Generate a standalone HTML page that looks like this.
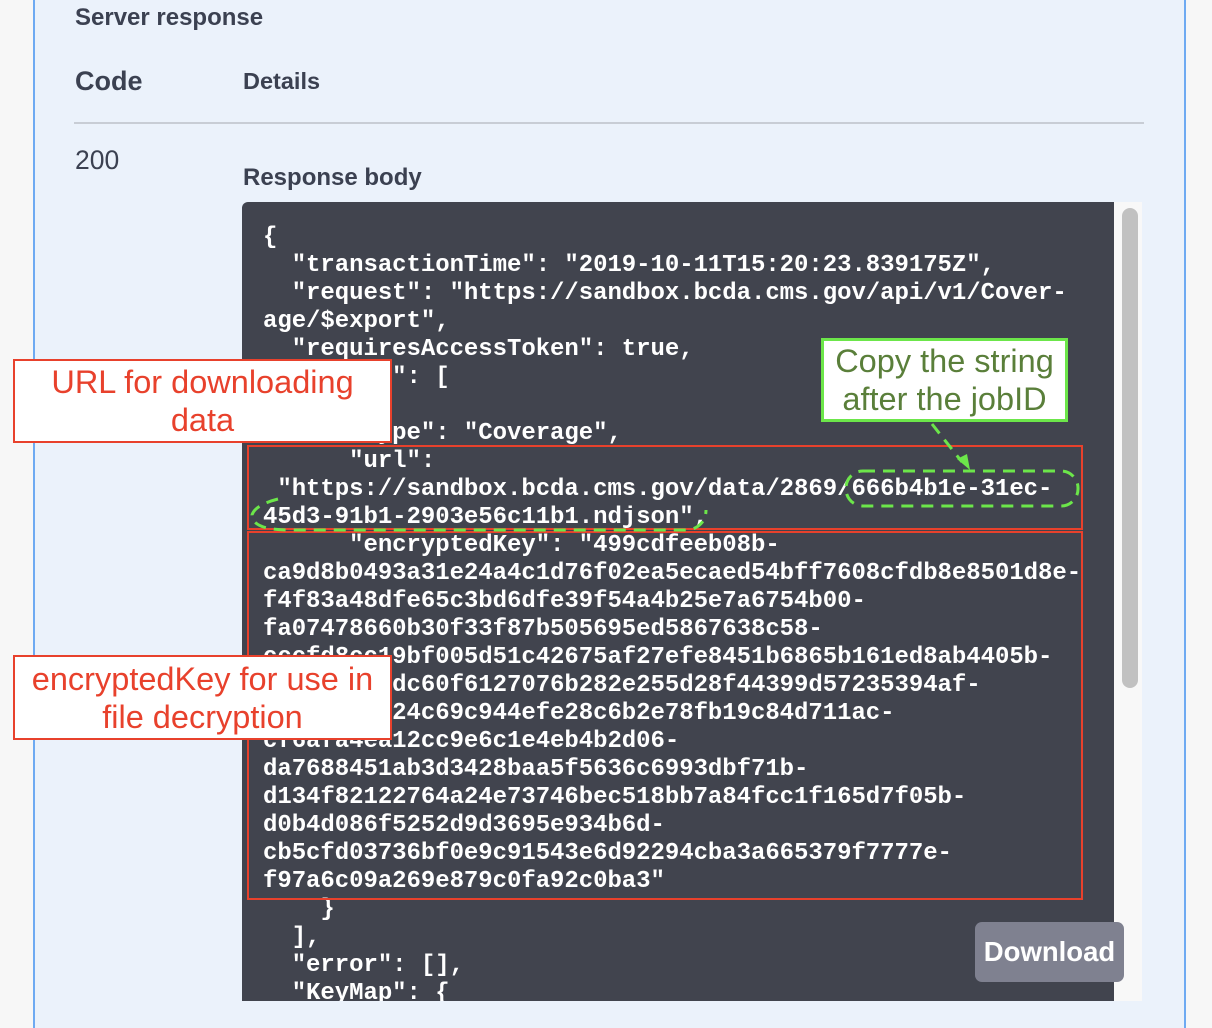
<!DOCTYPE html>
<html><head><meta charset="utf-8"><style>
*{margin:0;padding:0;box-sizing:border-box}
body{width:1212px;height:1018px;overflow:hidden;background:#f7f7f7;font-family:"Liberation Sans",Arial,sans-serif;position:relative}
.panel{position:absolute;left:33px;top:-2px;width:1153px;height:1030px;background:#ebf2fb;border-left:2px solid #6eaaf2;border-right:2px solid #6eaaf2}
.t{position:absolute;color:#3b4151;white-space:nowrap}
.code{position:absolute;left:242px;top:202px;width:872px;height:799px;background:#41444e;border-radius:6px 0 0 0;overflow:hidden}
pre{position:absolute;left:21px;top:22px;font-family:"Liberation Mono","Courier New",monospace;font-weight:bold;font-size:24px;line-height:28px;color:#fff;letter-spacing:-0.05px}
.track{position:absolute;left:1114px;top:202px;width:28px;height:799px;background:#f8f8f8}
.thumb{position:absolute;left:1122px;top:208px;width:16px;height:480px;background:#c1c1c1;border-radius:8px}
.rbox{position:absolute;border:2px solid #e8412c;background:#fff;color:#e8412c;font-size:32.5px;line-height:38px;text-align:center;display:flex;align-items:center;justify-content:center;white-space:nowrap}
.rout{position:absolute;border:2px solid #e8412c}
.gbox{position:absolute;left:821px;top:338px;width:247px;height:84px;border:3px solid #6ce64a;background:#fff;color:#5a7f3a;font-size:32.5px;line-height:38px;text-align:center;display:flex;align-items:center;justify-content:center;white-space:nowrap}
.btn{position:absolute;left:975px;top:922px;width:149px;height:60px;background:#7f8190;border-radius:7px;color:#fff;font-weight:bold;font-size:27.5px;display:flex;align-items:center;justify-content:center}
</style></head><body>
<div class="panel"></div>
<div class="t" style="left:75px;top:4px;font-size:24px;font-weight:bold">Server response</div>
<div class="t" style="left:75px;top:66px;font-size:27px;font-weight:bold">Code</div>
<div class="t" style="left:243px;top:68px;font-size:23.5px;font-weight:bold">Details</div>
<div style="position:absolute;left:74px;top:122px;width:1070px;height:2px;background:#c8cdd5"></div>
<div class="t" style="left:75px;top:145px;font-size:26.5px">200</div>
<div class="t" style="left:243px;top:164px;font-size:24px;font-weight:bold">Response body</div>
<div class="code"><pre>{
  "transactionTime": "2019-10-11T15:20:23.839175Z",
  "request": "https://sandbox.bcda.cms.gov/api/v1/Cover-
age/$export",
  "requiresAccessToken": true,
  "output": [
    {
      "type": "Coverage",
      "url":
 "https://sandbox.bcda.cms.gov/data/2869/666b4b1e-31ec-
45d3-91b1-2903e56c11b1.ndjson",
      "encryptedKey": "499cdfeeb08b-
ca9d8b0493a31e24a4c1d76f02ea5ecaed54bff7608cfdb8e8501d8e-
f4f83a48dfe65c3bd6dfe39f54a4b25e7a6754b00-
fa07478660b30f33f87b505695ed5867638c58-
cccfd8cc19bf005d51c42675af27efe8451b6865b161ed8ab4405b-
a2b5e8c9adc60f6127076b282e255d28f44399d57235394af-
9f3b0c21d24c69c944efe28c6b2e78fb19c84d711ac-
cf6afa4ea12cc9e6c1e4eb4b2d06-
da7688451ab3d3428baa5f5636c6993dbf71b-
d134f82122764a24e73746bec518bb7a84fcc1f165d7f05b-
d0b4d086f5252d9d3695e934b6d-
cb5cfd03736bf0e9c91543e6d92294cba3a665379f7777e-
f97a6c09a269e879c0fa92c0ba3"
    }
  ],
  "error": [],
  "KeyMap": {</pre></div>
<div class="track"></div><div class="thumb"></div>
<div class="btn">Download</div>
<div class="rout" style="left:247px;top:445px;width:836px;height:85px"></div>
<div class="rout" style="left:247px;top:531px;width:836px;height:369px"></div>
<div class="rbox" style="left:13px;top:359px;width:379px;height:84px">URL for downloading<br>data</div>
<div class="rbox" style="left:13px;top:655px;width:379px;height:85px">encryptedKey for use in<br>file decryption</div>
<div class="gbox">Copy the string<br>after the jobID</div>
<svg style="position:absolute;left:0;top:0" width="1212" height="1018">
<g fill="none" stroke="#6ce64a" stroke-width="3" stroke-dasharray="12,8">
<rect x="846" y="471" width="232" height="35" rx="17"/>
<path d="M278 499 Q255 505 252 515 Q252 530 290 530 L690 530 Q706 525 706 510"/>
<path d="M932 424 L962 462"/>
</g>
<path d="M957 459 L970 470 L967 454 Z" fill="#6ce64a"/>
</svg>
</body></html>
